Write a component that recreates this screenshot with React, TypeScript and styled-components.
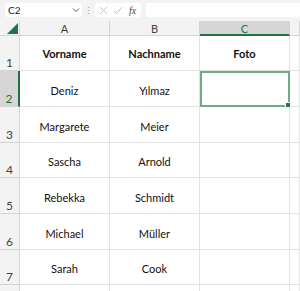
import React from 'react';
import styled, { createGlobalStyle } from 'styled-components';

const GlobalStyle = createGlobalStyle`
  html, body {
    margin: 0;
    padding: 0;
    background: #fff;
    overflow: hidden;
  }
  body {
    font-family: Lato, "Noto Sans", sans-serif;
  }
`

const Page = styled.div`
  width: 300px;
  height: 291px;
  overflow: hidden;
`

const FormulaBar = styled.div`
  display: flex;
  align-items: flex-start;
  height: 21px;
  background: #f3f3f3;
  padding: 3px 0 0 5px;
  box-sizing: border-box;
`

const NameBox = styled.div`
  display: flex;
  align-items: center;
  justify-content: space-between;
  width: 77px;
  height: 14px;
  background: #fff;
  border-radius: 2px;
  padding: 0 2px 0 3px;
  box-sizing: border-box;
  font-size: 10px;
  color: #222;
`

const Dots = styled.div`
  width: 13px;
  height: 14px;
  display: flex;
  align-items: center;
  justify-content: center;
  color: #9a9a9a;
  font-size: 9px;
`

const IconBox = styled.div`
  display: flex;
  align-items: center;
  gap: 5px;
  width: 46px;
  height: 14px;
  background: #fff;
  border-radius: 2px;
  padding: 0 3px 0 4px;
  box-sizing: border-box;
`

const Fx = styled.span`
  font-family: "Liberation Serif", serif;
  font-style: italic;
  font-size: 10px;
  color: #444;
  margin-left: 1px;
`

const FormulaInput = styled.div`
  flex: 1;
  height: 14px;
  margin-left: 5px;
  background: #fff;
  border-radius: 2px 0 0 2px;
`

const Grid = styled.div`
  display: grid;
  grid-template-columns: 20px 90px 90px 90px 1fr;
  grid-template-rows: 15px 35px 36px 36px 35px 36px 36px 35px 10px;
`

const Corner = styled.div`
  position: relative;
  background: #f3f3f3;
  border-right: 1px solid #d4d4d4;
  border-bottom: 1px solid #d4d4d4;
  box-sizing: border-box;
`

const Triangle = styled.div`
  position: absolute;
  right: 1px;
  bottom: 1px;
  width: 0;
  height: 0;
  border-left: 11px solid transparent;
  border-bottom: 11px solid #217346;
`

const ColHead = styled.div<{ $active?: boolean }>`
  display: flex;
  align-items: center;
  justify-content: center;
  background: ${p => (p.$active ? '#d6d6d6' : '#f3f3f3')};
  border-right: 1px solid #d4d4d4;
  border-bottom: ${p => (p.$active ? '2px solid #217346' : '1px solid #d4d4d4')};
  box-sizing: border-box;
  font-size: 11px;
  color: ${p => (p.$active ? '#217346' : '#444')};
  padding-top: 1px;
`

const RowHead = styled.div<{ $active?: boolean }>`
  display: flex;
  align-items: flex-end;
  justify-content: center;
  background: ${p => (p.$active ? '#d6d6d6' : '#f3f3f3')};
  border-right: ${p => (p.$active ? '2px solid #217346' : '1px solid #d4d4d4')};
  border-bottom: 1px solid #d4d4d4;
  box-sizing: border-box;
  font-size: 12px;
  color: ${p => (p.$active ? '#217346' : '#444')};
  padding-bottom: 0;
`

const Cell = styled.div<{ $bold?: boolean }>`
  display: flex;
  align-items: center;
  justify-content: center;
  border-right: 1px solid #e2e2e2;
  border-bottom: 1px solid #e2e2e2;
  box-sizing: border-box;
  font-size: 11px;
  font-weight: ${p => (p.$bold ? 700 : 400)};
  color: #111;
  padding-top: ${p => (p.$bold ? '1px' : '3px')};
`

const Selected = styled(Cell)`
  position: relative;
  border: 2px solid #6faa86;
`

const Handle = styled.div`
  position: absolute;
  right: -3px;
  bottom: -3px;
  width: 4px;
  height: 4px;
  background: #217346;
  border: 1px solid #fff;
`

const ChevronIcon = () => (
  <svg width="8" height="6" viewBox="0 0 8 6">
    <path d="M1 1.5 L4 4.5 L7 1.5" fill="none" stroke="#555" strokeWidth="1" />
  </svg>
)

const CrossIcon = () => (
  <svg width="9" height="9" viewBox="0 0 9 9">
    <path d="M1 1 L8 8 M8 1 L1 8" stroke="#c4c4c4" strokeWidth="1" />
  </svg>
)

const CheckIcon = () => (
  <svg width="10" height="9" viewBox="0 0 10 9">
    <path d="M1 5 L3.5 7.5 L9 1" fill="none" stroke="#c4c4c4" strokeWidth="1" />
  </svg>
)

const people = [
  ['Deniz', 'Yılmaz'],
  ['Margarete', 'Meier'],
  ['Sascha', 'Arnold'],
  ['Rebekka', 'Schmidt'],
  ['Michael', 'Müller'],
  ['Sarah', 'Cook'],
];

const App = () => (
  <Page>
    <GlobalStyle />
    <FormulaBar>
      <NameBox>
        <span>C2</span>
        <ChevronIcon />
      </NameBox>
      <Dots>⋮</Dots>
      <IconBox>
        <CrossIcon />
        <CheckIcon />
        <Fx>fx</Fx>
      </IconBox>
      <FormulaInput />
    </FormulaBar>
    <Grid>
      <Corner><Triangle /></Corner>
      <ColHead>A</ColHead>
      <ColHead>B</ColHead>
      <ColHead $active>C</ColHead>
      <ColHead />

      <RowHead>1</RowHead>
      <Cell $bold>Vorname</Cell>
      <Cell $bold>Nachname</Cell>
      <Cell $bold>Foto</Cell>
      <Cell />

      {people.map(([first, last], i) => (
        <React.Fragment key={first}>
          <RowHead $active={i === 0}>{i + 2}</RowHead>
          <Cell>{first}</Cell>
          <Cell>{last}</Cell>
          {i === 0 ? <Selected><Handle /></Selected> : <Cell />}
          <Cell />
        </React.Fragment>
      ))}

      <RowHead />
      <Cell />
      <Cell />
      <Cell />
      <Cell />
    </Grid>
  </Page>
);

export default App;
